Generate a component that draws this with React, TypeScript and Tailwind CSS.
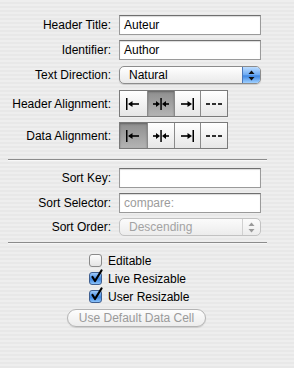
import React from "react";

const font = { fontFamily: '"Liberation Sans", Arial, sans-serif' };

const Label = ({ children }: { children: React.ReactNode }) => (
  <div className="w-[111px] shrink-0 text-right text-[12px] text-black">{children}</div>
);

const TextField = ({ value, placeholder }: { value?: string; placeholder?: string }) => (
  <div className="w-[142px] h-[20px] bg-white border border-[#9a9a9a] border-t-[#6f6f6f] shadow-[inset_0_1px_1px_rgba(0,0,0,0.15)] flex items-center px-[4px] text-[12px]">
    {value ? <span className="text-black">{value}</span> : <span className="text-[#9c9c9c]">{placeholder}</span>}
  </div>
);

const Stepper = ({ active }: { active: boolean }) => (
  <svg width="7" height="11" viewBox="0 0 7 11">
    <path d="M3.5 0.5 L6.5 4 L0.5 4 Z" fill={active ? "#111" : "#9a9a9a"} />
    <path d="M3.5 10.5 L6.5 7 L0.5 7 Z" fill={active ? "#111" : "#9a9a9a"} />
  </svg>
);

const Popup = ({ value, disabled }: { value: string; disabled?: boolean }) => (
  <div
    className={`w-[142px] h-[18px] rounded-[5px] border flex items-stretch overflow-hidden text-[12px] ${
      disabled
        ? "border-[#c2c2c2] bg-[linear-gradient(#fbfbfb,#ececec)] text-[#a3a3a3]"
        : "border-[#8c8c8c] bg-[linear-gradient(#ffffff,#e9e9e9)] text-black shadow-[0_1px_1px_rgba(0,0,0,0.15)]"
    }`}
  >
    <div className="flex-1 flex items-center pl-[9px]">{value}</div>
    <div
      className={`w-[18px] flex items-center justify-center ${
        disabled
          ? "border-l border-[#d0d0d0]"
          : "bg-[linear-gradient(#bcdcff_0%,#6aa8f2_50%,#3d86e3_55%,#9fd0ff_100%)] border-l border-[#4a76b8]"
      }`}
    >
      <Stepper active={!disabled} />
    </div>
  </div>
);

const AlignIcon = ({ kind }: { kind: "left" | "center" | "right" | "justify" }) => (
  <svg width="18" height="14" viewBox="0 0 18 14">
    {kind === "left" && (
      <>
        <rect x="2" y="1" width="1.5" height="12" fill="#000" />
        <rect x="5" y="6.2" width="10" height="1.6" fill="#000" />
        <path d="M4 7 L8.5 4 L8.5 10 Z" fill="#000" />
      </>
    )}
    {kind === "center" && (
      <>
        <rect x="8.3" y="1" width="1.5" height="12" fill="#000" />
        <rect x="1" y="6.2" width="5" height="1.6" fill="#000" />
        <path d="M8 7 L4 4 L4 10 Z" fill="#000" />
        <rect x="12" y="6.2" width="5" height="1.6" fill="#000" />
        <path d="M10 7 L14 4 L14 10 Z" fill="#000" />
      </>
    )}
    {kind === "right" && (
      <>
        <rect x="14.5" y="1" width="1.5" height="12" fill="#000" />
        <rect x="3" y="6.2" width="9" height="1.6" fill="#000" />
        <path d="M14 7 L9.5 4 L9.5 10 Z" fill="#000" />
      </>
    )}
    {kind === "justify" && (
      <>
        <rect x="1" y="6.2" width="4" height="1.6" fill="#000" />
        <rect x="7" y="6.2" width="4" height="1.6" fill="#000" />
        <rect x="13" y="6.2" width="4" height="1.6" fill="#000" />
      </>
    )}
  </svg>
);

const Segmented = ({ selected }: { selected: number }) => {
  const kinds = ["left", "center", "right", "justify"] as const;
  return (
    <div className="flex border border-[#7a7a7a] h-[27px] w-[109px]">
      {kinds.map((k, i) => (
        <div
          key={k}
          className={`w-[27px] flex items-center justify-center ${i > 0 ? "border-l border-[#8a8a8a]" : ""} ${
            i === selected
              ? "bg-[linear-gradient(#8e8e8e,#b4b4b4)] shadow-[inset_0_1px_2px_rgba(0,0,0,0.3)]"
              : "bg-[linear-gradient(#ffffff,#e6e6e6)]"
          }`}
        >
          <AlignIcon kind={k} />
        </div>
      ))}
    </div>
  );
};

const Checkbox = ({ checked, label }: { checked: boolean; label: string }) => (
  <div className="flex items-center h-[13px] pl-[89px]">
    <div className="relative w-[13px] h-[13px]">
      <div
        className={`w-[13px] h-[13px] rounded-[3px] border ${
          checked
            ? "border-[#3f5f90] bg-[linear-gradient(#9fcaf9,#3e86e0_55%,#8cc3fb)]"
            : "border-[#8a8a8a] bg-[linear-gradient(#fdfdfd,#e4e4e4)]"
        }`}
      />
      {checked && (
        <svg className="absolute left-[1px] top-[-3px]" width="13" height="15" viewBox="0 0 13 15">
          <path d="M2.5 8 L5 12 L11.5 1.5" stroke="#000" strokeWidth="2.2" fill="none" strokeLinecap="round" strokeLinejoin="round" />
        </svg>
      )}
    </div>
    <span className="ml-[6px] text-[12px] text-black">{label}</span>
  </div>
);

const Row = ({ label, children, className }: { label: string; children: React.ReactNode; className?: string }) => (
  <div className={`flex items-center gap-[8px] ${className ?? ""}`}>
    <Label>{label}</Label>
    {children}
  </div>
);

export default function App() {
  return (
    <div
      style={font}
      className="w-[294px] h-[368px] overflow-hidden bg-[repeating-linear-gradient(to_bottom,#eeeeee_0px,#eeeeee_2px,#e8e8e8_2px,#e8e8e8_4px)] pt-[15px] leading-none"
    >
      <Row label="Header Title:">
        <TextField value="Auteur" />
      </Row>
      <Row label="Identifier:" className="mt-[5px]">
        <TextField value="Author" />
      </Row>
      <Row label="Text Direction:" className="mt-[6px]">
        <Popup value="Natural" />
      </Row>
      <Row label="Header Alignment:" className="mt-[6px]">
        <Segmented selected={1} />
      </Row>
      <Row label="Data Alignment:" className="mt-[5px]">
        <Segmented selected={0} />
      </Row>
      <div className="mx-[8px] w-[259px] mt-[10px] border-t border-[#8c8c8c] border-b border-b-white/60 h-[2px]" />
      <Row label="Sort Key:" className="mt-[7px]">
        <TextField value="" />
      </Row>
      <Row label="Sort Selector:" className="mt-[5px]">
        <TextField placeholder="compare:" />
      </Row>
      <Row label="Sort Order:" className="mt-[5px]">
        <Popup value="Descending" disabled />
      </Row>
      <div className="mx-[8px] w-[259px] mt-[6px] border-t border-[#8c8c8c] border-b border-b-white/60 h-[2px]" />
      <div className="mt-[10px] flex flex-col gap-[5px]">
        <Checkbox checked={false} label="Editable" />
        <Checkbox checked label="Live Resizable" />
        <Checkbox checked label="User Resizable" />
      </div>
      <div className="ml-[67px] mt-[6px] w-[139px] h-[18px] rounded-full border border-[#b4b4b4] bg-[linear-gradient(#fdfdfd,#ececec)] shadow-[0_1px_1px_rgba(0,0,0,0.12)] flex items-center justify-center text-[12px] text-[#9a9a9a]">
        Use Default Data Cell
      </div>
    </div>
  );
}
